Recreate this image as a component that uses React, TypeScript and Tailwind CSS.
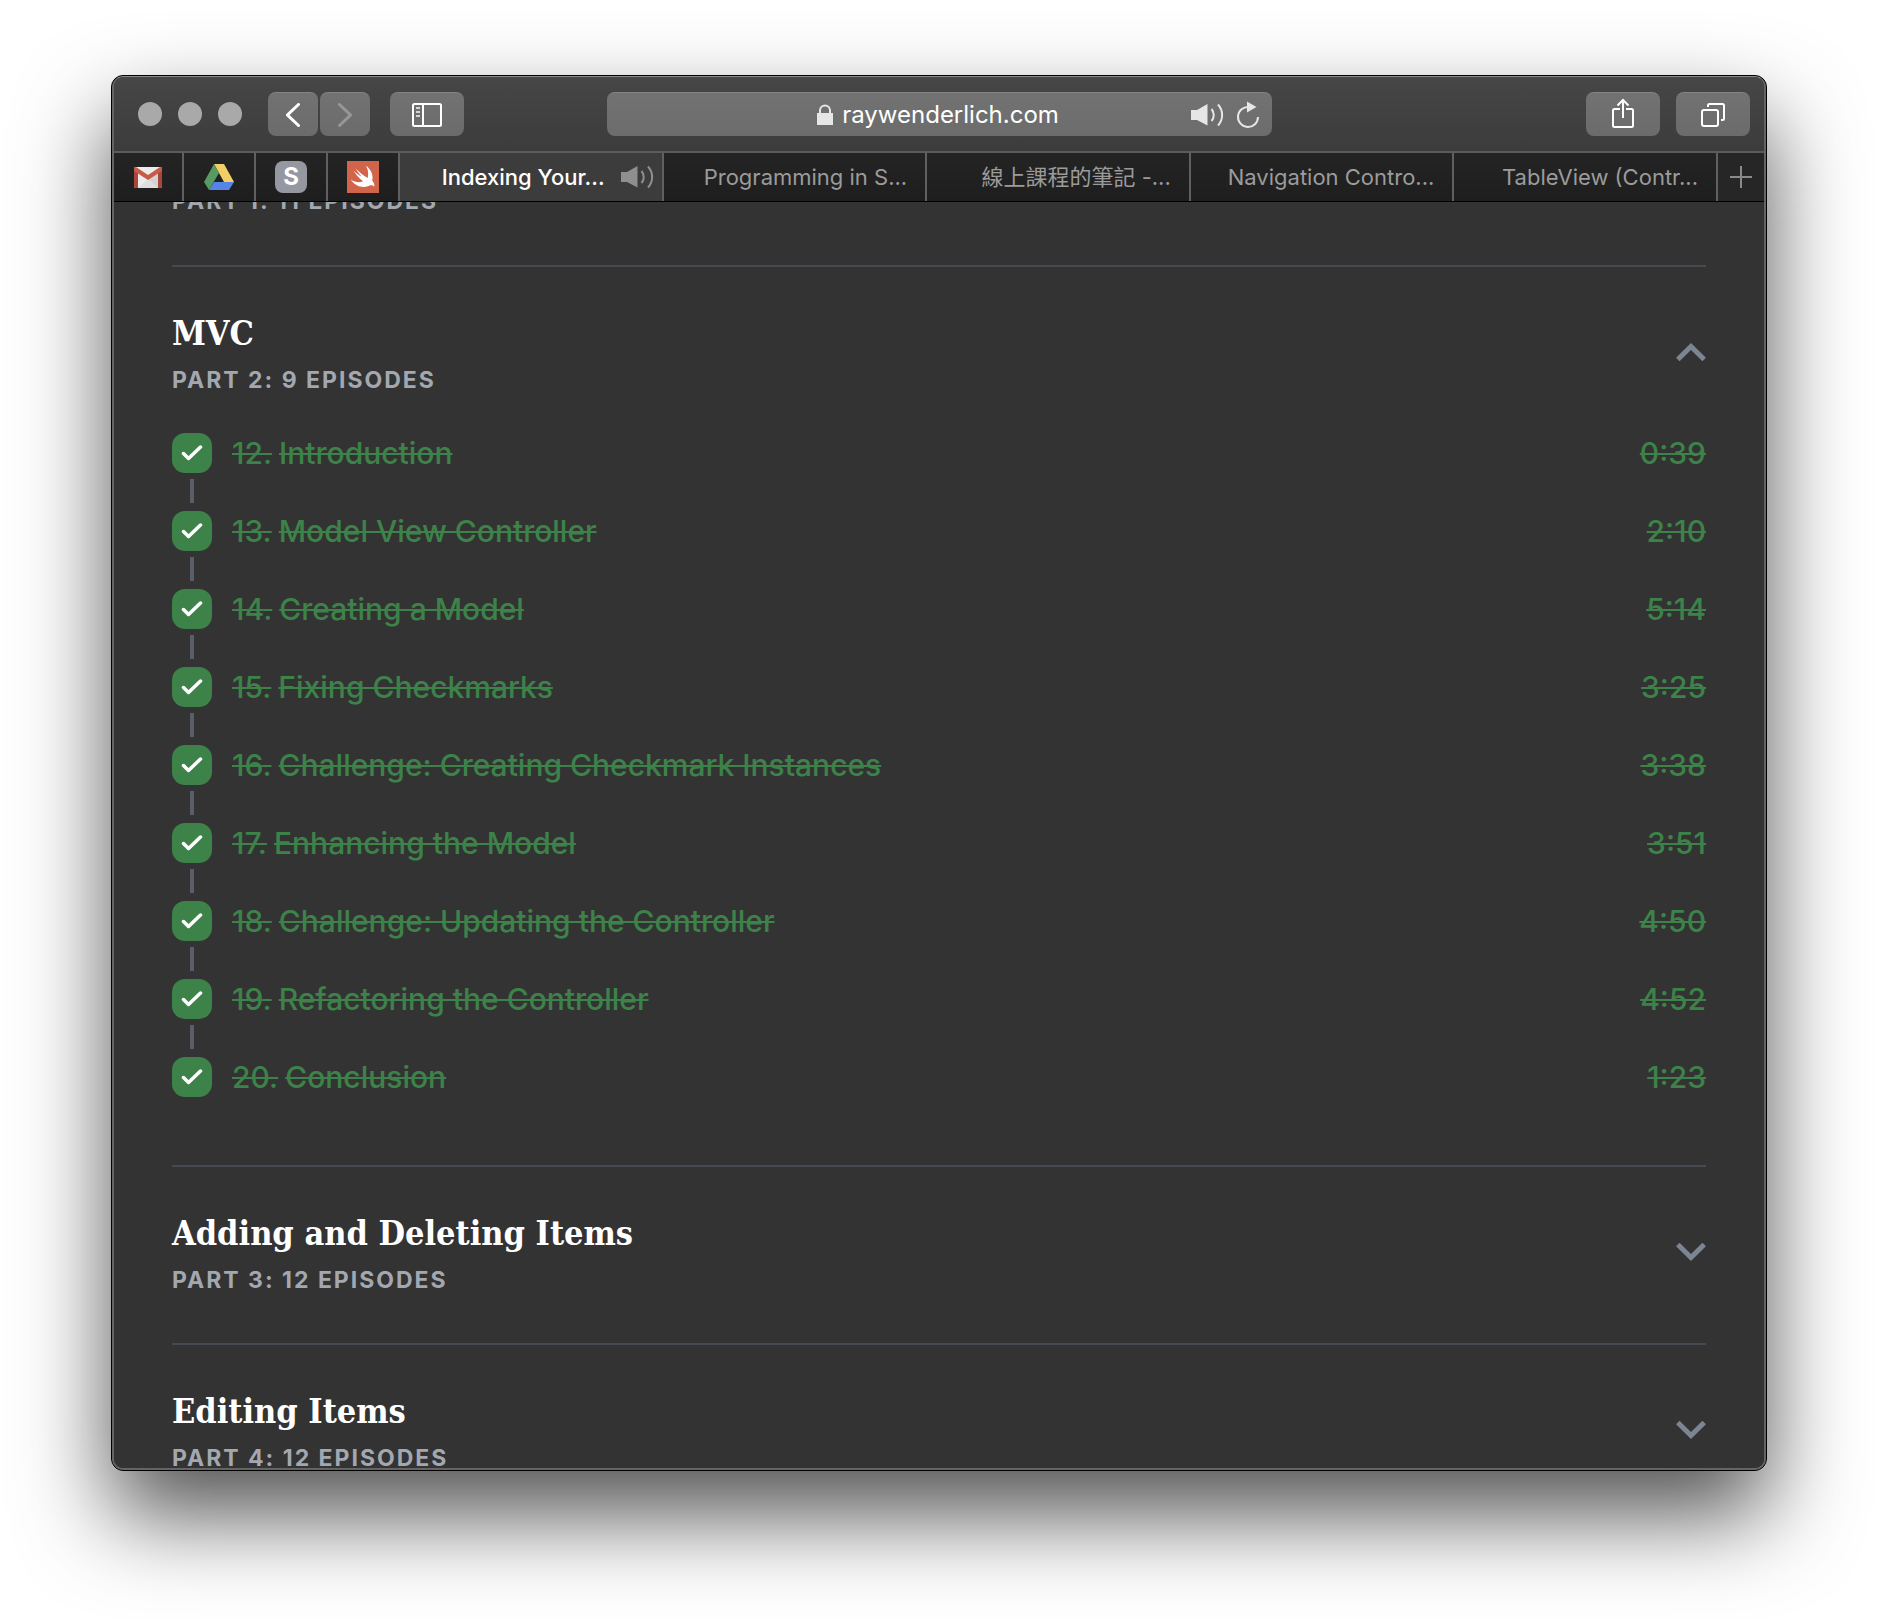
import type { ReactNode } from "react";

const SANS = "font-['Inter','Noto_Sans_CJK_TC',sans-serif]";

const episodes = [
  { n: 12, title: "Introduction", time: "0:39" },
  { n: 13, title: "Model View Controller", time: "2:10" },
  { n: 14, title: "Creating a Model", time: "5:14" },
  { n: 15, title: "Fixing Checkmarks", time: "3:25" },
  { n: 16, title: "Challenge: Creating Checkmark Instances", time: "3:38" },
  { n: 17, title: "Enhancing the Model", time: "3:51" },
  { n: 18, title: "Challenge: Updating the Controller", time: "4:50" },
  { n: 19, title: "Refactoring the Controller", time: "4:52" },
  { n: 20, title: "Conclusion", time: "1:23" },
];

const tabs = ["Programming in S...", "線上課程的筆記 -...", "Navigation Contro...", "TableView (Contr..."];

function Speaker({ className }: { className: string }) {
  return (
    <svg viewBox="0 0 33 24" width="33" height="24" className={className} aria-hidden="true">
      <path d="M0 7h6L16.500 1v21.500L6 17H0z" fill="currentColor" />
      <path d="M20.500 6c3 3.500 3 8.500 0 12M27 1.500c5.500 6 5.500 15 0 21" fill="none" stroke="currentColor" strokeWidth="2" />
    </svg>
  );
}

function ToolButton({ label, className, children }: { label: string; className: string; children: ReactNode }) {
  return (
    <button
      type="button"
      aria-label={label}
      className={`flex h-11 items-center justify-center rounded-lg border-t border-[#858585] bg-linear-to-b from-[#727272] to-[#6b6b6b] ${className}`}
    >
      {children}
    </button>
  );
}

function Toolbar() {
  return (
    <header className="flex h-[74px] shrink-0 items-center bg-linear-to-b from-[#464646] to-[#3c3c3c] px-3.5">
      <div className="flex flex-1 items-center">
        <div className="ml-2.5 flex gap-4">
          <button type="button" aria-label="Close" className="size-6 rounded-full bg-[#a9a9a9]" />
          <button type="button" aria-label="Minimize" className="size-6 rounded-full bg-[#a9a9a9]" />
          <button type="button" aria-label="Zoom" className="size-6 rounded-full bg-[#a9a9a9]" />
        </div>
        <div className="ml-[26px] flex gap-0.5">
          <ToolButton label="Back" className="w-[50px]">
            <svg viewBox="0 0 14 24" width="14" height="24" fill="none" stroke="#fff" strokeWidth="3" strokeLinecap="round">
              <path d="M12.500 1.500L1.500 12l11 10.500" />
            </svg>
          </ToolButton>
          <ToolButton label="Forward" className="w-[50px]">
            <svg viewBox="0 0 14 24" width="14" height="24" fill="none" stroke="#979797" strokeWidth="3" strokeLinecap="round">
              <path d="M1.500 1.500l11 10.500-11 10.500" />
            </svg>
          </ToolButton>
        </div>
        <ToolButton label="Show sidebar" className="ml-5 w-[74px]">
          <svg viewBox="0 0 30 24" width="30" height="24" fill="none" stroke="#fff" strokeWidth="2">
            <rect x="1" y="1" width="28" height="22" rx="1.500" />
            <path d="M11 1v22" />
            <path d="M4 5h4M4 9h4M4 13h4" stroke="#d4d4d4" />
          </svg>
        </ToolButton>
      </div>

      <div className="flex h-11 w-[41%] items-center rounded-lg border-t border-[#858585] bg-linear-to-b from-[#727272] to-[#6c6c6c] pr-3 pl-[78px]">
        <div className="flex flex-1 items-center justify-center gap-2">
          <svg viewBox="0 0 18 22" width="18" height="22" aria-hidden="true">
            <path d="M1 9h16v12H1z" fill="#e6e6e6" />
            <path d="M4 9V6.500a5 5 0 0 1 10 0V9" fill="none" stroke="#e6e6e6" strokeWidth="2" />
          </svg>
          <input
            type="text"
            aria-label="Address"
            defaultValue="raywenderlich.com"
            className="field-sizing-content bg-transparent text-2xl text-white outline-none"
          />
        </div>
        <button type="button" aria-label="Mute tab">
          <Speaker className="text-[#e6e6e6]" />
        </button>
        <button type="button" aria-label="Reload" className="ml-3">
          <svg viewBox="0 0 24 28" width="24" height="28">
            <path d="M13 6A10 10 0 1 0 22 16" fill="none" stroke="#e6e6e6" strokeWidth="2" />
            <path d="M11 0.500l9.500 5.500L11 11.500z" fill="#e6e6e6" />
          </svg>
        </button>
      </div>

      <div className="flex flex-1 justify-end gap-4">
        <ToolButton label="Share" className="w-[74px]">
          <svg viewBox="0 0 22 30" width="22" height="30" fill="none" stroke="#fff" strokeWidth="2" className="mb-1">
            <path d="M8 11H2.500A1.500 1.500 0 0 0 1 12.500v15A1.500 1.500 0 0 0 2.500 29h17a1.500 1.500 0 0 0 1.500-1.500v-15a1.500 1.500 0 0 0-1.500-1.500H14" />
            <path d="M11 20V2M5.500 7.500L11 2l5.500 5.500" />
          </svg>
        </ToolButton>
        <ToolButton label="Tab overview" className="w-[74px]">
          <svg viewBox="0 0 24 24" width="24" height="24" fill="none" stroke="#fff" strokeWidth="2">
            <rect x="1" y="7" width="16" height="16" rx="2" />
            <path d="M7 4V2.500A1.500 1.500 0 0 1 8.500 1h13A1.500 1.500 0 0 1 23 2.500v13a1.500 1.500 0 0 1-1.500 1.500H20" />
          </svg>
        </ToolButton>
      </div>
    </header>
  );
}

function PinnedTab({ label, children }: { label: string; children: ReactNode }) {
  return (
    <button
      type="button"
      aria-label={label}
      className="flex w-[72px] shrink-0 items-center justify-center border-r-2 border-[#606060] bg-linear-to-b from-[#242424] to-[#1e1e1e] first:w-[70px]"
    >
      {children}
    </button>
  );
}

function TabBar() {
  return (
    <nav aria-label="Tabs" className="flex h-[51px] shrink-0 border-t-2 border-b border-t-[#5c5c5c] border-b-black bg-[#262626]">
      <PinnedTab label="Gmail">
        <svg viewBox="0 0 28 21" width="28" height="21">
          <rect width="28" height="21" rx="1.500" fill="#ececec" />
          <path d="M4 21l10-9 10 9z" fill="#dedede" />
          <path d="M14 12l10-6v15z" fill="#d2d2d2" />
          <path d="M0 2h4v19H1.500A1.500 1.500 0 0 1 0 19.500zM24 2h4v17.500a1.500 1.500 0 0 1-1.500 1.500H24z" fill="#a9463a" />
          <path d="M0 1.500C0 .5 1 0 2 0l12 8L26 0c1 0 2 .5 2 1.500V4L14 13 0 4z" fill="#c85a48" />
        </svg>
      </PinnedTab>
      <PinnedTab label="Google Drive">
        <svg viewBox="0 0 30 26" width="30" height="26">
          <path d="M10 0h10l10 18H20z" fill="#f3cd66" />
          <path d="M10 0l5 9L5 26 0 18z" fill="#579b63" />
          <path d="M10 18h20l-5 8H5z" fill="#5485e6" />
        </svg>
      </PinnedTab>
      <PinnedTab label="S">
        <span className="flex size-8 items-center justify-center rounded-lg bg-[#9597a1] text-2xl font-bold text-white">S</span>
      </PinnedTab>
      <PinnedTab label="Swift">
        <svg viewBox="0 0 32 32" width="32" height="32">
          <rect width="32" height="32" fill="#d2644a" />
          <path d="M19 4.800c4.800 3.300 7.700 9.200 6.200 14.600 2.300 2.700 2.500 5.400 1.900 6.300-1.100-1.700-3-1.900-4.600-1.100C16 28 8.200 25.400 3.800 18.600c4.200 2.900 8.700 3.600 12.300 1.700C11.800 17 8.500 12.800 6.200 9.500c3.300 2.800 6.500 5 8.600 6.300C12.300 13.200 10.200 10.300 8.600 7.600c3.500 3.500 8 7.100 12 9.500 1.200-4 .6-8.400-1.600-12.300z" fill="#fff" />
        </svg>
      </PinnedTab>
      <div className="grid flex-1 grid-cols-5">
        <button
          type="button"
          aria-current="page"
          className="flex items-center justify-end border-r-2 border-[#606060] bg-[#3c3c3c] pr-2 text-[22px] font-medium text-white"
        >
          Indexing Your...
          <Speaker className="ml-4 text-[#8f8f8f]" />
        </button>
        {tabs.map((t) => (
          <button
            key={t}
            type="button"
            className="flex items-center justify-end border-r-2 border-[#606060] bg-linear-to-b from-[#242424] to-[#1e1e1e] pr-[18px] text-[22px] whitespace-nowrap text-[#9b9b9b]"
          >
            {t}
          </button>
        ))}
      </div>
      <button type="button" aria-label="New tab" className="flex w-[46px] shrink-0 items-center justify-center">
        <svg viewBox="0 0 22 22" width="22" height="22" stroke="#8a8a8a" strokeWidth="2">
          <path d="M11 0v22M0 11h22" />
        </svg>
      </button>
    </nav>
  );
}

function Subtitle({ children }: { children: ReactNode }) {
  return <span className="block text-[23px] leading-[38px] font-bold tracking-[2px] text-[#a3a8b0]">{children}</span>;
}

function SectionHeader({ title, subtitle, open = false }: { title: string; subtitle: string; open?: boolean }) {
  return (
    <button type="button" aria-expanded={open} className="flex w-full items-center justify-between pt-[38px] pb-11 text-left">
      <span>
        <span className="block font-['DejaVu_Serif_Condensed','DejaVu_Serif',serif] text-[34px] leading-[56px] font-bold text-white">
          {title}
        </span>
        <Subtitle>{subtitle}</Subtitle>
      </span>
      <svg
        viewBox="0 0 30 18"
        width="30"
        height="18"
        fill="none"
        stroke="#7c8594"
        strokeWidth="5"
        className={open ? "rotate-180" : ""}
      >
        <path d="M1.800 1.500L15 14.500 28.200 1.500" />
      </svg>
    </button>
  );
}

function Episode({ n, title, time, last }: { n: number; title: string; time: string; last: boolean }) {
  return (
    <li className="flex gap-5">
      <div className="flex flex-col items-center">
        <div className="grid size-10 place-items-center">
          <input
            id={`episode-${n}`}
            type="checkbox"
            defaultChecked
            className="col-start-1 row-start-1 size-10 appearance-none rounded-[13px] bg-[#3c8249]"
          />
          <svg
            viewBox="0 0 22 16"
            width="22"
            height="16"
            fill="none"
            stroke="#fff"
            strokeWidth="3.500"
            strokeLinecap="round"
            strokeLinejoin="round"
            className="pointer-events-none col-start-1 row-start-1"
          >
            <path d="M2.500 8.500L7.500 13.500 19.500 2" />
          </svg>
        </div>
        {!last && <div className="mt-1.5 mb-2 h-6 w-1 bg-[#5a5e68]" />}
      </div>
      <div className="flex h-10 flex-1 items-center justify-between text-[30px] font-medium text-[#3c8249]">
        <label htmlFor={`episode-${n}`} className="flex gap-[7px]">
          <span className="line-through decoration-2">{n}.</span>
          <span className="line-through decoration-2">{title}</span>
        </label>
        <span className="line-through decoration-2">{time}</span>
      </div>
    </li>
  );
}

export default function App() {
  return (
    <div className={`h-screen overflow-hidden bg-white px-[111px] pt-[75px] pb-[147px] ${SANS}`}>
      <div className="h-full rounded-xl shadow-[0_44px_90px_rgba(0,0,0,0.68)]">
        <div className="flex h-full flex-col overflow-hidden rounded-xl border border-black bg-[#333]">
          <div className="flex min-h-0 flex-1 flex-col overflow-hidden rounded-[11px] border-2 border-t border-[#646464] border-t-[#8a8a8a]">
            <Toolbar />
            <TabBar />
            <main className="min-h-0 flex-1 overflow-hidden bg-[#333] px-[58px]">
              <section className="flex h-[63px] flex-col justify-end overflow-hidden pb-[45px]">
                <Subtitle>PART 1: 11 EPISODES</Subtitle>
              </section>
              <section className="border-t-2 border-[#444952]">
                <SectionHeader title="MVC" subtitle="PART 2: 9 EPISODES" open />
                <ul className="-mt-2.5 pb-[68px]">
                  {episodes.map((e, i) => (
                    <Episode key={e.n} {...e} last={i === episodes.length - 1} />
                  ))}
                </ul>
              </section>
              <section className="border-t-2 border-[#444952]">
                <SectionHeader title="Adding and Deleting Items" subtitle="PART 3: 12 EPISODES" />
              </section>
              <section className="border-t-2 border-[#444952]">
                <SectionHeader title="Editing Items" subtitle="PART 4: 12 EPISODES" />
              </section>
            </main>
          </div>
        </div>
      </div>
    </div>
  );
}
